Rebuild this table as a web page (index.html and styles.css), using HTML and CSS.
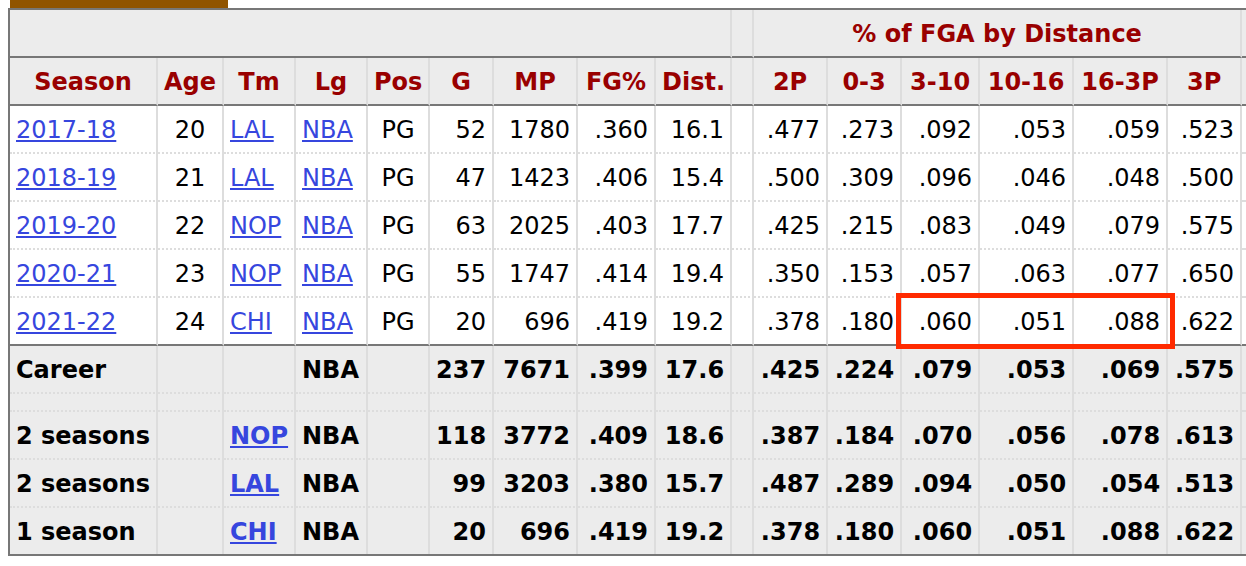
FILE: index.html
```html
<!DOCTYPE html>
<html>
<head>
<meta charset="utf-8">
<link rel="stylesheet" href="styles.css">
</head>
<body>
<div class="page">
  <div class="tab"></div>
  <table class="stats">
    <colgroup>
      <col class="w-season"><col class="w-age"><col class="w-tm"><col class="w-lg"><col class="w-pos">
      <col class="w-g"><col class="w-mp"><col class="w-fg"><col class="w-dist"><col class="w-sp">
      <col class="w-2p"><col class="w-03"><col class="w-310"><col class="w-1016"><col class="w-163p"><col class="w-3p"><col class="w-extra">
    </colgroup>
    <thead>
      <tr class="over">
        <th colspan="9"></th>
        <th></th>
        <th colspan="6">% of FGA by Distance</th>
        <th class="x"></th>
      </tr>
      <tr class="head">
        <th>Season</th><th>Age</th><th>Tm</th><th>Lg</th><th>Pos</th><th>G</th><th>MP</th><th>FG%</th><th>Dist.</th><th></th>
        <th>2P</th><th>0-3</th><th>3-10</th><th>10-16</th><th>16-3P</th><th>3P</th><th class="x"></th>
      </tr>
    </thead>
    <tbody>
      <tr>
        <td class="l"><a href="#">2017-18</a></td><td class="c">20</td><td class="l"><a href="#">LAL</a></td><td class="l"><a href="#">NBA</a></td><td class="c">PG</td>
        <td>52</td><td>1780</td><td>.360</td><td>16.1</td><td></td>
        <td>.477</td><td>.273</td><td>.092</td><td>.053</td><td>.059</td><td>.523</td><td class="x"></td>
      </tr>
      <tr>
        <td class="l"><a href="#">2018-19</a></td><td class="c">21</td><td class="l"><a href="#">LAL</a></td><td class="l"><a href="#">NBA</a></td><td class="c">PG</td>
        <td>47</td><td>1423</td><td>.406</td><td>15.4</td><td></td>
        <td>.500</td><td>.309</td><td>.096</td><td>.046</td><td>.048</td><td>.500</td><td class="x"></td>
      </tr>
      <tr>
        <td class="l"><a href="#">2019-20</a></td><td class="c">22</td><td class="l"><a href="#">NOP</a></td><td class="l"><a href="#">NBA</a></td><td class="c">PG</td>
        <td>63</td><td>2025</td><td>.403</td><td>17.7</td><td></td>
        <td>.425</td><td>.215</td><td>.083</td><td>.049</td><td>.079</td><td>.575</td><td class="x"></td>
      </tr>
      <tr>
        <td class="l"><a href="#">2020-21</a></td><td class="c">23</td><td class="l"><a href="#">NOP</a></td><td class="l"><a href="#">NBA</a></td><td class="c">PG</td>
        <td>55</td><td>1747</td><td>.414</td><td>19.4</td><td></td>
        <td>.350</td><td>.153</td><td>.057</td><td>.063</td><td>.077</td><td>.650</td><td class="x"></td>
      </tr>
      <tr class="last">
        <td class="l"><a href="#">2021-22</a></td><td class="c">24</td><td class="l"><a href="#">CHI</a></td><td class="l"><a href="#">NBA</a></td><td class="c">PG</td>
        <td>20</td><td>696</td><td>.419</td><td>19.2</td><td></td>
        <td>.378</td><td>.180</td><td>.060</td><td>.051</td><td>.088</td><td>.622</td><td class="x"></td>
      </tr>
    </tbody>
    <tfoot>
      <tr class="sum">
        <td class="l">Career</td><td></td><td></td><td class="l">NBA</td><td></td>
        <td>237</td><td>7671</td><td>.399</td><td>17.6</td><td></td>
        <td>.425</td><td>.224</td><td>.079</td><td>.053</td><td>.069</td><td>.575</td><td class="x"></td>
      </tr>
      <tr class="sum gap">
        <td></td><td></td><td></td><td></td><td></td><td></td><td></td><td></td><td></td><td></td><td></td><td></td><td></td><td></td><td></td><td></td><td class="x"></td>
      </tr>
      <tr class="sum">
        <td class="l">2 seasons</td><td></td><td class="l"><a href="#">NOP</a></td><td class="l">NBA</td><td></td>
        <td>118</td><td>3772</td><td>.409</td><td>18.6</td><td></td>
        <td>.387</td><td>.184</td><td>.070</td><td>.056</td><td>.078</td><td>.613</td><td class="x"></td>
      </tr>
      <tr class="sum">
        <td class="l">2 seasons</td><td></td><td class="l"><a href="#">LAL</a></td><td class="l">NBA</td><td></td>
        <td>99</td><td>3203</td><td>.380</td><td>15.7</td><td></td>
        <td>.487</td><td>.289</td><td>.094</td><td>.050</td><td>.054</td><td>.513</td><td class="x"></td>
      </tr>
      <tr class="sum final">
        <td class="l">1 season</td><td></td><td class="l"><a href="#">CHI</a></td><td class="l">NBA</td><td></td>
        <td>20</td><td>696</td><td>.419</td><td>19.2</td><td></td>
        <td>.378</td><td>.180</td><td>.060</td><td>.051</td><td>.088</td><td>.622</td><td class="x"></td>
      </tr>
    </tfoot>
  </table>
  <div class="highlight"></div>
</div>
</body>
</html>
```

FILE: styles.css
```css
html, body {
  margin: 0;
  padding: 0;
  overflow: hidden;
  background: #fff;
}

body {
  font-family: "DejaVu Sans", Verdana, sans-serif;
  font-size: 24px;
  color: #000;
}

.page {
  position: relative;
  padding-left: 8px;
}

.tab {
  margin-left: 2px;
  width: 218px;
  height: 8px;
  background: #905400;
}

.stats {
  table-layout: fixed;
  border-collapse: separate;
  border-spacing: 0;
  width: 1238px;
  border-top: 2px solid #777;
  border-left: 2px solid #777;
  border-bottom: 2px solid #777;
}

.w-season { width: 148px; }
.w-age { width: 66px; }
.w-tm { width: 72px; }
.w-lg { width: 72px; }
.w-pos { width: 62px; }
.w-g { width: 64px; }
.w-mp { width: 84px; }
.w-fg { width: 78px; }
.w-dist { width: 76px; }
.w-sp { width: 22px; }
.w-2p { width: 74px; }
.w-03 { width: 74px; }
.w-310 { width: 78px; }
.w-1016 { width: 94px; }
.w-163p { width: 94px; }
.w-3p { width: 74px; }
.w-extra { width: 4px; }

.stats th,
.stats td {
  box-sizing: border-box;
  height: 48px;
  padding: 2px 6px 0;
  border-right: 2px solid #ddd;
  border-bottom: 2px dotted #ddd;
  vertical-align: middle;
  white-space: nowrap;
  overflow: hidden;
}

.stats th {
  background: #ececec;
  color: #990000;
  font-weight: bold;
  text-align: center;
  border-bottom: 2px solid #777;
}

.stats td {
  text-align: right;
  background: #fff;
}

.stats td.l { text-align: left; }
.stats td.c { text-align: center; }

.stats .x,
.stats td.x,
.stats th.x {
  padding: 0;
  border-right: none;
}

.stats tr.last td {
  border-bottom: 2px solid #777;
}

.stats tr.sum td {
  background: #ececec;
  font-weight: bold;
}

.stats tr.gap td {
  height: 18px;
  padding: 0;
}

.stats tr.final td {
  border-bottom: none;
  height: 46px;
}

.stats a {
  color: #3646de;
  text-decoration: underline;
}

.highlight {
  position: absolute;
  left: 896px;
  top: 293px;
  width: 279px;
  height: 56px;
  box-sizing: border-box;
  border: 5px solid #ff2a00;
}
```
